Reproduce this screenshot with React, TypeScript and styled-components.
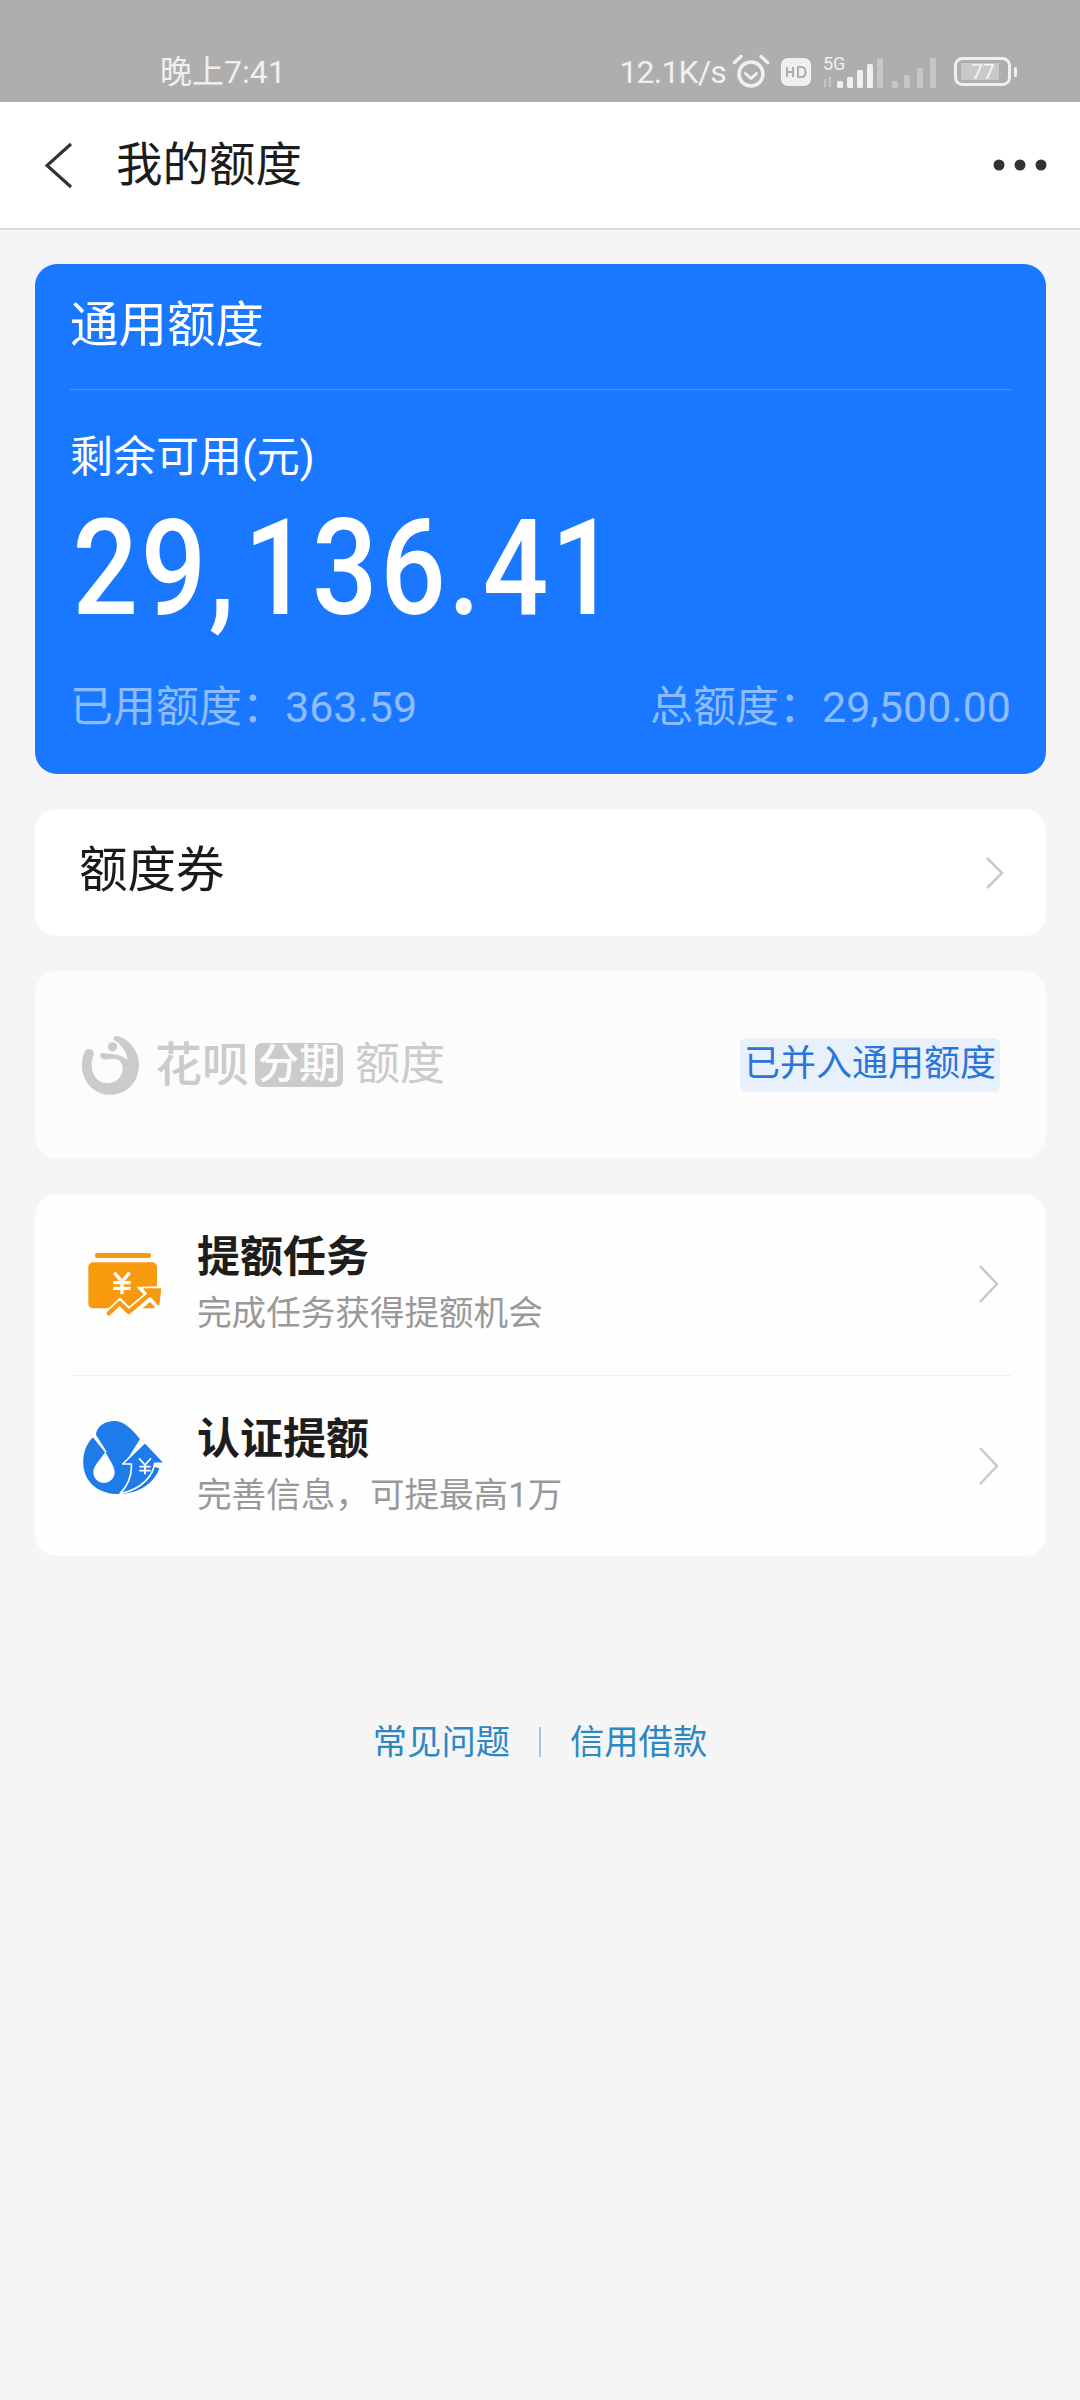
import React from 'react';
import styled, { createGlobalStyle } from 'styled-components';

const GlobalStyle = createGlobalStyle`
  html, body {
    margin: 0;
    padding: 0;
    background: #f5f5f5;
  }
  * {
    box-sizing: border-box;
  }
  body {
    font-family: Roboto, "Noto Sans CJK SC", sans-serif;
  }
`;

const Page = styled.div`
  width: 1080px;
  height: 2400px;
  background: #f5f5f5;
  overflow: hidden;
`;

const StatusBar = styled.div`
  height: 102px;
  background: #aeaeae;
  display: flex;
  align-items: center;
  padding: 42px 62px 0 160px;
  color: #f0f0f0;
  font-size: 32px;
  line-height: 40px;
`;

const StatusTime = styled.span`
  flex: 1;
`;

const StatusRight = styled.div`
  display: flex;
  align-items: center;
`;

const StatusSpeed = styled.span`
  letter-spacing: -0.8px;
`;

const StatusIcon = styled.svg<{ $gap?: number }>`
  display: block;
  margin-left: ${(p) => p.$gap ?? 0}px;
`;

const Header = styled.header`
  height: 128px;
  background: #fff;
  border-bottom: 2px solid #dcdcdc;
  display: flex;
  align-items: center;
  padding: 0 33px 0 45px;
`;

const BackIcon = styled.svg`
  display: block;
`;

const Title = styled.h1`
  flex: 1;
  margin: 0 0 0 43px;
  font-size: 46.500px;
  line-height: 60px;
  font-weight: 400;
  color: #1c1c1c;
`;

const Content = styled.main`
  padding: 34px 34px 0 35px;
  display: flex;
  flex-direction: column;
  gap: 35px;
`;

const BlueCard = styled.section`
  height: 510px;
  background: #1978ff;
  border-radius: 22px;
  padding: 0 35px;
  color: #fff;
`;

const BlueTitle = styled.div`
  height: 126px;
  border-bottom: 1px solid rgba(255, 255, 255, 0.2);
  font-size: 48.500px;
  line-height: 124px;
`;

const BlueLabel = styled.div`
  margin-top: 37px;
  font-size: 43px;
  line-height: 60px;
`;

const Amount = styled.div`
  margin-top: 12px;
  padding-left: 3px;
  font-size: 134px;
  line-height: 140px;
  font-weight: 500;
  letter-spacing: 3px;
  white-space: nowrap;
  transform: scaleX(0.86);
  transform-origin: left center;
`;

const AmountComma = styled.span`
  margin-right: 8px;
`;

const QuotaRow = styled.div`
  margin-top: 38px;
  display: flex;
  justify-content: space-between;
  font-size: 43px;
  line-height: 60px;
  color: #8dbcff;
`;

const Card = styled.section`
  background: #fff;
  border-radius: 22px;
`;

const CouponCard = styled(Card)`
  height: 127px;
  display: flex;
  align-items: center;
  justify-content: space-between;
  padding: 0 41px 0 44px;
  font-size: 48.500px;
  color: #1a1a1a;
`;

const CouponLabel = styled.span`
  line-height: 60px;
  margin-top: -3px;
`;

const Chevron = styled.svg`
  display: block;
  flex: none;
`;

const MergedCard = styled(Card)`
  height: 188px;
  background: #fcfcfc;
  display: flex;
  align-items: center;
  padding: 0 46px 0 46px;
  color: #cbcbcb;
`;

const BrandName = styled.span`
  margin-left: 15px;
  font-size: 47px;
  line-height: 60px;
  font-weight: 500;
`;

const BrandPill = styled.span`
  margin-left: 6px;
  width: 88px;
  height: 44px;
  border-radius: 7px;
  background: #cbcbcb;
  color: #fcfcfc;
  font-size: 41px;
  line-height: 42px;
  font-weight: 500;
  text-align: center;
  white-space: nowrap;
`;

const BrandSuffix = styled.span`
  flex: 1;
  margin-left: 12px;
  font-size: 45px;
  line-height: 60px;
`;

const MergedTag = styled.span`
  height: 54px;
  padding: 0 4px;
  border-radius: 6px;
  background: #e8f0fb;
  color: #2a75d8;
  font-size: 36px;
  line-height: 52px;
`;

const TaskCard = styled(Card)`
  height: 362px;
  padding: 0 35px;
  background: #fefefe;
  display: flex;
  flex-direction: column;
`;

const TaskRow = styled.div<{ $divided?: boolean }>`
  flex: 1;
  display: flex;
  align-items: center;
  border-top: ${(p) => (p.$divided ? '1px solid #efefef' : 'none')};
  padding-right: 11px;
`;

const TaskIcon = styled.svg<{ $lift?: number }>`
  display: block;
  flex: none;
  margin-left: 13px;
  margin-bottom: ${(p) => p.$lift ?? 0}px;
`;

const TaskText = styled.div`
  flex: 1;
  margin-left: 30px;
`;

const TaskTitle = styled.div`
  font-size: 43px;
  line-height: 54px;
  font-weight: 700;
  color: #1d1d1d;
  margin-top: -2px;
`;

const TaskSub = styled.div`
  margin-top: 6px;
  font-size: 34.6px;
  line-height: 46px;
  color: #999;
`;

const FooterLinks = styled.nav`
  margin-top: 163px;
  display: flex;
  justify-content: center;
  align-items: center;
  font-size: 34.3px;
  line-height: 46px;
  color: #2b88c6;
`;

const FooterDivider = styled.span`
  width: 2px;
  height: 30px;
  margin: 0 29px 0 29px;
  background: #a3c6de;
`;

function Alarm() {
  return (
    <StatusIcon $gap={6} width="38" height="38" viewBox="0 0 38 38" fill="none" stroke="#f0f0f0">
      <circle cx="19" cy="21" r="12" strokeWidth="3.600" />
      <path d="M13.500 20.500l5.500 5 5.500-5" strokeWidth="3" strokeLinecap="round" strokeLinejoin="round" />
      <path d="M2.500 9.500L9 3.500M35.500 9.500L29 3.500" strokeWidth="3.400" strokeLinecap="round" />
    </StatusIcon>
  );
}

function HdBadge() {
  return (
    <StatusIcon $gap={11} width="30" height="28" viewBox="0 0 30 28">
      <rect width="30" height="28" y="0" rx="7" fill="#f0f0f0" />
      <path
        d="M6 9v10M6 14h6M12 9v10M17 9v10h3.500c2.400 0 4-2 4-5s-1.600-5-4-5z"
        fill="none"
        stroke="#aeaeae"
        strokeWidth="2"
      />
    </StatusIcon>
  );
}

function Signal5G() {
  return (
    <StatusIcon $gap={11} width="62" height="34" viewBox="0 0 62 34">
      <text x="1" y="15" fontSize="18" fill="#f0f0f0" fontFamily="Roboto, sans-serif">5G</text>
      <path d="M3 24v8M8 22v10" stroke="#c6c6c6" strokeWidth="2" />
      <rect x="15" y="26" width="6" height="7" rx="1.500" fill="#f0f0f0" />
      <rect x="25" y="22" width="6" height="11" rx="1.500" fill="#f0f0f0" />
      <rect x="35" y="15" width="6" height="18" rx="1.500" fill="#f0f0f0" />
      <rect x="45" y="9" width="6" height="24" rx="1.500" fill="#f0f0f0" />
      <rect x="55" y="3" width="6" height="30" rx="1.500" fill="#c6c6c6" />
    </StatusIcon>
  );
}

function SignalEmpty() {
  return (
    <StatusIcon $gap={8} width="44" height="34" viewBox="0 0 44 34">
      <rect x="0" y="26" width="6" height="7" rx="1.500" fill="#c6c6c6" />
      <rect x="12" y="20" width="6" height="13" rx="1.500" fill="#c6c6c6" />
      <rect x="25" y="13" width="6" height="20" rx="1.500" fill="#c6c6c6" />
      <rect x="38" y="3" width="6" height="30" rx="1.500" fill="#c6c6c6" />
    </StatusIcon>
  );
}

function Battery() {
  return (
    <StatusIcon $gap={18} width="64" height="30" viewBox="0 0 64 30">
      <rect x="1.500" y="1.500" width="54" height="26" rx="7" fill="none" stroke="#f0f0f0" strokeWidth="3" />
      <rect x="7" y="6" width="38" height="17" fill="#c9c9c9" />
      <rect x="60" y="10" width="3" height="10" rx="1.500" fill="#f0f0f0" />
      <text x="29" y="22" fontSize="21" textAnchor="middle" fill="#f4f4f4" fontFamily="Roboto, sans-serif">77</text>
    </StatusIcon>
  );
}

function RightChevron({ wide }: { wide?: boolean }) {
  const w = wide ? 22 : 20;
  const h = wide ? 40 : 34;
  return (
    <Chevron width={w} height={h} viewBox={`0 0 ${w} ${h}`} fill="none" stroke="#c9c9c9" strokeWidth="2.500">
      <path d={`M2 2L${w - 3} ${h / 2}L2 ${h - 2}`} />
    </Chevron>
  );
}

function HuabeiLogo() {
  return (
    <svg width="59" height="62" viewBox="150 222 178 186" style={{ flex: 'none', display: 'block' }}>
      <path
        d="M262 228C300 240 325 275 325 315C325 365 288 405 238 405C190 405 153 365 153 318C153 295 158 275 168 268C180 264 190 272 188 284C180 305 180 330 192 350C205 372 240 378 262 358C278 342 280 320 268 304C262 296 250 294 232 298C215 302 204 290 210 280C216 276 228 282 242 282C262 282 284 292 290 300C292 280 270 250 250 240C244 232 252 225 262 228Z"
        fill="#cbcbcb"
      />
      <circle cx="245" cy="260" r="14" fill="#cbcbcb" />
    </svg>
  );
}

function TaskOrangeIcon() {
  return (
    <TaskIcon width="84" height="70" viewBox="70 85 250 210">
      <rect x="105" y="97" width="168" height="15" rx="6" fill="#f79a0e" />
      <rect x="85" y="125" width="206" height="138" rx="14" fill="#f79a0e" />
      <path d="M163 156l23 27 23-27M186 183v38M160 186h52M160 203h52" fill="none" stroke="#fff" strokeWidth="10" />
      <path d="M132 296l48-45 27 26 60-50" fill="none" stroke="#fff" strokeWidth="30" />
      <path d="M245 205l58-2-8 58z" fill="#fff" stroke="#fff" strokeWidth="14" />
      <path d="M146 278l33-31 27 27 62-52" fill="none" stroke="#f79a0e" strokeWidth="13" strokeLinecap="round" strokeLinejoin="round" />
      <path d="M252 205l50 0-6 48z" fill="#f79a0e" stroke="#f79a0e" strokeWidth="4" strokeLinejoin="round" />
    </TaskIcon>
  );
}

function TaskBlueIcon() {
  return (
    <TaskIcon $lift={18} width="84" height="74" viewBox="70 55 250 222">
      <path
        d="M100 106C76 128 68 160 70 190C73 242 118 280 180 277C240 276 286 240 298 200L215 175L150 160Z"
        fill="#1d7bea"
      />
      <path d="M108 100C108 72 140 56 168 58C195 60 222 90 240 112L190 192L150 165Z" fill="#1d7bea" />
      <path d="M98 102L138 152" stroke="#fff" strokeWidth="5" fill="none" />
      <path
        d="M136 150C118 178 100 192 100 212C100 232 116 244 132 244C150 244 164 230 164 212C164 194 148 174 136 150Z"
        fill="#fff"
      />
      <path d="M255 122L315 185H284C280 218 250 262 180 276C205 250 216 218 214 187H188Z" fill="#1d7bea" stroke="#fff" strokeWidth="5" strokeLinejoin="round" />
      <path d="M237 170l18 20 18-20M255 190v28M238 195h34M238 207h34" fill="none" stroke="#fff" strokeWidth="5.500" />
    </TaskIcon>
  );
}

export default function App() {
  return (
    <Page>
      <GlobalStyle />
      <StatusBar>
        <StatusTime>晚上7:41</StatusTime>
        <StatusRight>
          <StatusSpeed>12.1K/s</StatusSpeed>
          <Alarm />
          <HdBadge />
          <Signal5G />
          <SignalEmpty />
          <Battery />
        </StatusRight>
      </StatusBar>
      <Header>
        <BackIcon width="28" height="47" viewBox="0 0 28 47" fill="none" stroke="#333" strokeWidth="3.200">
          <path d="M26 2L2 23.500L26 45" />
        </BackIcon>
        <Title>我的额度</Title>
        <svg width="54" height="12" viewBox="0 0 54 12" fill="#333">
          <circle cx="6" cy="6" r="5.500" />
          <circle cx="27" cy="6" r="5.500" />
          <circle cx="48" cy="6" r="5.500" />
        </svg>
      </Header>
      <Content>
        <BlueCard>
          <BlueTitle>通用额度</BlueTitle>
          <BlueLabel>剩余可用(元)</BlueLabel>
          <Amount>
            29<AmountComma>,</AmountComma>136.41
          </Amount>
          <QuotaRow>
            <span>已用额度：363.59</span>
            <span>总额度：29,500.00</span>
          </QuotaRow>
        </BlueCard>
        <CouponCard>
          <CouponLabel>额度券</CouponLabel>
          <RightChevron />
        </CouponCard>
        <MergedCard>
          <HuabeiLogo />
          <BrandName>花呗</BrandName>
          <BrandPill>分期</BrandPill>
          <BrandSuffix>额度</BrandSuffix>
          <MergedTag>已并入通用额度</MergedTag>
        </MergedCard>
        <TaskCard>
          <TaskRow>
            <TaskOrangeIcon />
            <TaskText>
              <TaskTitle>提额任务</TaskTitle>
              <TaskSub>完成任务获得提额机会</TaskSub>
            </TaskText>
            <RightChevron wide />
          </TaskRow>
          <TaskRow $divided>
            <TaskBlueIcon />
            <TaskText>
              <TaskTitle>认证提额</TaskTitle>
              <TaskSub>完善信息，可提最高1万</TaskSub>
            </TaskText>
            <RightChevron wide />
          </TaskRow>
        </TaskCard>
      </Content>
      <FooterLinks>
        <span>常见问题</span>
        <FooterDivider />
        <span>信用借款</span>
      </FooterLinks>
    </Page>
  );
}
